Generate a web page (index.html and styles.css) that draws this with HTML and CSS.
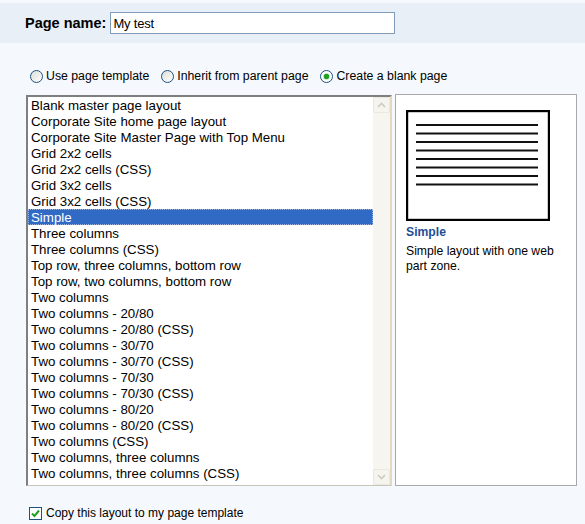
FILE: index.html
```html
<!DOCTYPE html>
<html lang="en">
<head>
    <meta charset="UTF-8">
    <title>New page</title>
    <link rel="stylesheet" href="styles.css">
</head>
<body>
    <div class="page-name">
        <label for="page-name">Page name:</label>
        <input type="text" id="page-name" value="My test">
    </div>

    <div class="mode">
        <label class="option"><input type="radio" name="mode"> Use page template</label>
        <label class="option"><input type="radio" name="mode"> Inherit from parent page</label>
        <label class="option"><input type="radio" name="mode" checked> Create a blank page</label>
    </div>

    <div class="picker">
        <div class="layout-list">
            <div class="items">
                <div class="item">Blank master page layout</div>
                <div class="item">Corporate Site home page layout</div>
                <div class="item">Corporate Site Master Page with Top Menu</div>
                <div class="item">Grid 2x2 cells</div>
                <div class="item">Grid 2x2 cells (CSS)</div>
                <div class="item">Grid 3x2 cells</div>
                <div class="item">Grid 3x2 cells (CSS)</div>
                <div class="item selected">Simple</div>
                <div class="item">Three columns</div>
                <div class="item">Three columns (CSS)</div>
                <div class="item">Top row, three columns, bottom row</div>
                <div class="item">Top row, two columns, bottom row</div>
                <div class="item">Two columns</div>
                <div class="item">Two columns - 20/80</div>
                <div class="item">Two columns - 20/80 (CSS)</div>
                <div class="item">Two columns - 30/70</div>
                <div class="item">Two columns - 30/70 (CSS)</div>
                <div class="item">Two columns - 70/30</div>
                <div class="item">Two columns - 70/30 (CSS)</div>
                <div class="item">Two columns - 80/20</div>
                <div class="item">Two columns - 80/20 (CSS)</div>
                <div class="item">Two columns (CSS)</div>
                <div class="item">Two columns, three columns</div>
                <div class="item">Two columns, three columns (CSS)</div>
            </div>
            <div class="scrollbar">
                <div class="scroll-btn">
                    <svg width="9" height="6" viewBox="0 0 9 6"><path d="M1 5 L4.5 1.5 L8 5" fill="none" stroke="#cdcbc0" stroke-width="1.6"/></svg>
                </div>
                <div class="scroll-track"></div>
                <div class="scroll-btn">
                    <svg width="9" height="6" viewBox="0 0 9 6"><path d="M1 1 L4.5 4.5 L8 1" fill="none" stroke="#cdcbc0" stroke-width="1.6"/></svg>
                </div>
            </div>
        </div>

        <div class="preview">
            <svg class="thumb" width="144" height="111" viewBox="0 0 144 111">
                <rect x="1" y="1" width="142" height="109" fill="#fff" stroke="#000" stroke-width="2.4"/>
                <g stroke="#111" stroke-width="2">
                    <line x1="10" y1="15" x2="132" y2="15"/>
                    <line x1="10" y1="23.5" x2="132" y2="23.5"/>
                    <line x1="10" y1="32" x2="132" y2="32"/>
                    <line x1="10" y1="40.5" x2="132" y2="40.5"/>
                    <line x1="10" y1="49" x2="132" y2="49"/>
                    <line x1="10" y1="57.5" x2="132" y2="57.5"/>
                    <line x1="10" y1="66" x2="132" y2="66"/>
                    <line x1="10" y1="74.5" x2="132" y2="74.5"/>
                </g>
            </svg>
            <div class="preview-title">Simple</div>
            <div class="preview-text">Simple layout with one web part zone.</div>
        </div>
    </div>

    <label class="copy">
        <span class="check">
            <svg width="9" height="9" viewBox="0 0 9 9"><path d="M1 4.5 L3.5 7 L8 1.5" fill="none" stroke="#21a121" stroke-width="2"/></svg>
        </span>
        Copy this layout to my page template
    </label>
</body>
</html>
```

FILE: styles.css
```css
body {
    margin: 0;
    background: #f5f8fc;
    font-family: "Liberation Sans", Arial, sans-serif;
    font-size: 12px;
    color: #000;
}

/* top band with the page name field */
.page-name {
    margin-top: 3px;
    height: 40px;
    background: #e8eff7;
    display: flex;
    align-items: center;
    padding-left: 25px;
}
.page-name label {
    font-weight: bold;
    font-size: 14.5px;
    margin-right: 4px;
}
.page-name input {
    width: 285px;
    height: 22px;
    box-sizing: border-box;
    border: 1px solid #7f9db9;
    padding: 0 2px;
    font-family: "Liberation Sans", Arial, sans-serif;
    font-size: 13px;
    letter-spacing: -0.2px;
}

/* page type radios */
.mode {
    display: flex;
    gap: 12px;
    padding: 25px 0 0 30px;
    height: 16px;
    font-size: 12.3px;
}
.option {
    display: flex;
    align-items: center;
    gap: 3px;
}
.option input {
    appearance: none;
    margin: 0;
    width: 13px;
    height: 13px;
    border: 1px solid #1c5180;
    border-radius: 50%;
    background: linear-gradient(135deg, #dcdcd7, #fff);
}
.option input:checked {
    background: radial-gradient(circle, #21a121 0 2.5px, #c8e8c8 3px, #fff 4px), #fff;
}

.picker {
    display: flex;
    align-items: flex-start;
    gap: 3px;
    margin: 10px 0 0 26px;
}

/* list box with the layouts */
.layout-list {
    display: flex;
    width: 366px;
    height: 391px;
    box-sizing: border-box;
    margin-top: 1px;
    border-style: solid;
    border-width: 2px 2px 1px 2px;
    border-color: #7f7f7f #e6d7bf #c8c5bc #7f7f7f;
    background: #fff;
}
.items {
    flex: 1;
    font-size: 13.3px;
}
.item {
    height: 16px;
    line-height: 17px;
    padding-left: 3px;
    white-space: nowrap;
    overflow: hidden;
}
.item.selected {
    background: #316ac5;
    color: #fff;
    outline: 1px dotted #9bb5e0;
    outline-offset: -1px;
}
.scrollbar {
    width: 17px;
    display: flex;
    flex-direction: column;
    background: #f7f5ef;
}
.scroll-btn {
    height: 16px;
    box-sizing: border-box;
    border: 1px solid #ebe8df;
    border-radius: 2px;
    background: #f5f4ee;
    display: flex;
    align-items: center;
    justify-content: center;
}
.scroll-track {
    flex: 1;
}

/* preview of the selected layout */
.preview {
    width: 182px;
    height: 392px;
    box-sizing: border-box;
    border: 1px solid #a9a9a9;
    background: #fff;
    padding: 15px 0 0 10px;
    font-size: 12.2px;
}
.thumb {
    display: block;
}
.preview-title {
    margin-top: 3px;
    font-weight: bold;
    color: #1e4e96;
    line-height: 16px;
}
.preview-text {
    margin-top: 4px;
    line-height: 15px;
    padding-right: 6px;
}

.copy {
    display: flex;
    align-items: center;
    gap: 4px;
    margin: 20px 0 0 29px;
}
.check {
    width: 13px;
    height: 13px;
    box-sizing: border-box;
    border: 1px solid #1c5180;
    background: #fff;
    display: flex;
    align-items: center;
    justify-content: center;
}
```
